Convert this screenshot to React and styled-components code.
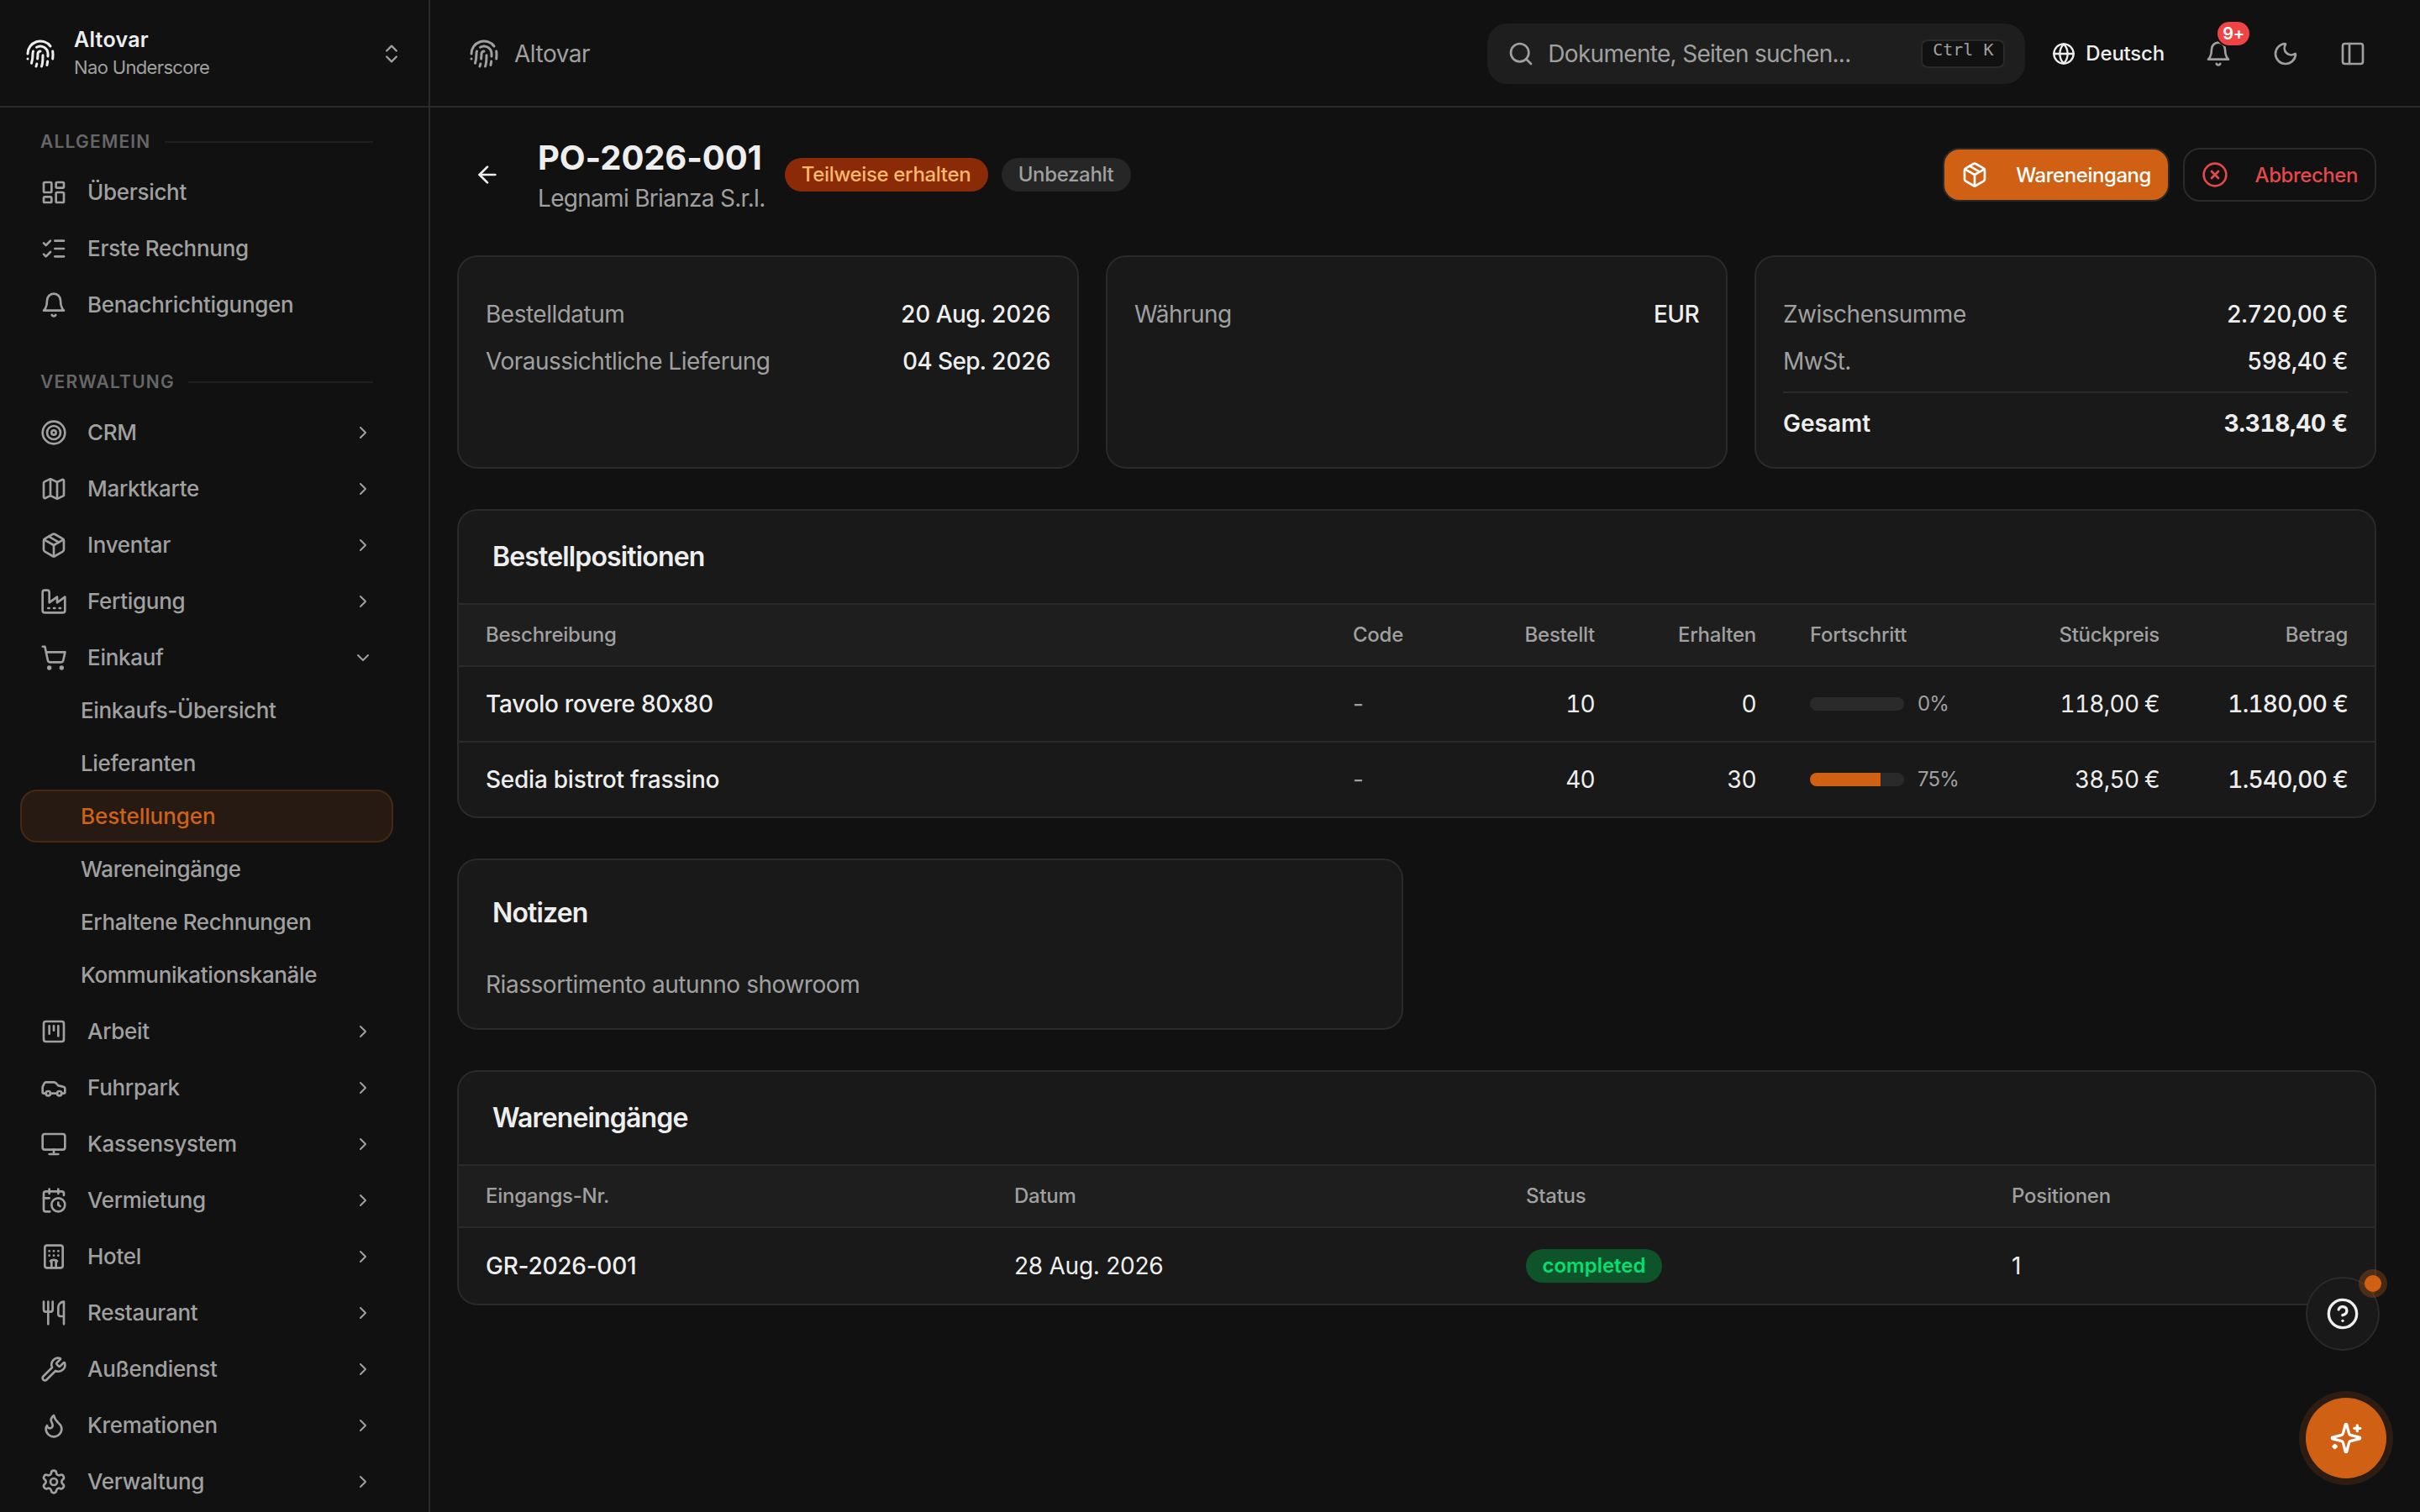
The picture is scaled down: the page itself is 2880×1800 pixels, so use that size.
import React from 'react';
import styled, { createGlobalStyle, css } from 'styled-components';
import {
  ArrowLeft, CalendarClock, Car, ChevronDown, ChevronRight, ChevronsUpDown,
  CircleHelp, CircleX, FingerprintPattern, Flame, Globe, Hotel, LayoutDashboard,
  ListChecks, Map as MapIcon, Monitor, Moon, Package, PanelLeft, Search,
  Settings, ShoppingCart, SquareKanban, Target, Utensils, Wrench,
} from 'lucide-react';

const GlobalStyle = createGlobalStyle`
  * {
    box-sizing: border-box;
  }

  body {
    margin: 0;
    background-color: #111111;
    color: #eeeeee;
    font-family: "Inter", "Liberation Sans", sans-serif;
    font-size: 28px;
    line-height: 40px;
    font-feature-settings: "calt" 0;
  }

  svg {
    display: block;
    flex-shrink: 0;
  }

  button {
    font-family: inherit;
    cursor: pointer;
  }
`;

const Layout = styled.div`
  display: flex;
  width: 2880px;
  height: 1800px;
  overflow: hidden;
`;

/* Sidebar */

const Sidebar = styled.aside`
  width: 512px;
  flex-shrink: 0;
  border-right: 2px solid #2a2a2a;
`;

const Workspace = styled.div`
  display: flex;
  align-items: center;
  height: 128px;
  padding: 2px 30px 0;
  border-bottom: 2px solid #2a2a2a;
`;

const WorkspaceText = styled.div`
  flex: 1;
  margin: 0 0 2px 22px;
`;

const WorkspaceName = styled.div`
  font-size: 25px;
  font-weight: 600;
  line-height: 34px;
  letter-spacing: 0.25px;
`;

const WorkspaceUser = styled.div`
  font-size: 22px;
  line-height: 32px;
  letter-spacing: -0.65px;
  color: #a0a0a0;
`;

const Nav = styled.nav`
  padding: 21px 42px 0 24px;
`;

const NavSection = styled.section`
  margin-bottom: 41px;
`;

const NavLabel = styled.h6`
  display: flex;
  align-items: center;
  gap: 16px;
  height: 40px;
  margin: 0 24px 8px;
  font-size: 21px;
  font-weight: 600;
  letter-spacing: 1.2px;
  text-transform: uppercase;
  color: #666666;

  &::after {
    content: "";
    flex: 1;
    height: 2px;
    background-color: #202020;
  }
`;

const NavItem = styled.div`
  display: flex;
  align-items: center;
  gap: 24px;
  height: 63px;
  margin-bottom: 4px;
  padding: 0 24px;
  font-size: 26px;
  font-weight: 500;
  letter-spacing: -0.3px;
  color: #a0a0a0;

  span {
    flex: 1;
  }
`;

const SubList = styled.div`
  margin: -4px 0 4px;
`;

const SubItem = styled.div`
  display: flex;
  align-items: center;
  height: 63px;
  padding: 0 70px;
  border: 2px solid transparent;
  border-radius: 20px;
  font-size: 26px;
  font-weight: 500;
  letter-spacing: -0.35px;
  white-space: nowrap;
  color: #a0a0a0;
  ${({ $active }) => $active && css`
    border-color: #472810;
    background-color: #261a12;
    color: #ce6218;
    letter-spacing: -0.1px;
  `}
`;

/* Header */

const Main = styled.div`
  display: flex;
  flex: 1;
  flex-direction: column;
`;

const Header = styled.header`
  display: flex;
  align-items: center;
  height: 128px;
  padding: 2px 64px 0 46px;
  border-bottom: 2px solid #2a2a2a;
`;

const Brand = styled.div`
  display: flex;
  flex: 1;
  align-items: center;
  gap: 18px;
  letter-spacing: -0.5px;
  color: #a0a0a0;
`;

const SearchBox = styled.div`
  display: flex;
  align-items: center;
  gap: 16px;
  width: 640px;
  height: 72px;
  padding: 0 24px;
  border-radius: 24px;
  background-color: #1e1e1e;
  color: #a0a0a0;

  span {
    flex: 1;
    letter-spacing: -0.7px;
    white-space: nowrap;
  }
`;

const Kbd = styled.kbd`
  width: 100px;
  height: 34px;
  border: 2px solid #2a2a2a;
  border-radius: 8px;
  background-color: #111111;
  font-family: "DejaVu Sans Mono", monospace;
  font-size: 20px;
  line-height: 21px;
  text-align: center;
`;

const Language = styled.div`
  display: flex;
  align-items: center;
  gap: 12px;
  margin-left: 32px;
  font-size: 24px;
  font-weight: 500;
  letter-spacing: -0.2px;
`;

const HeaderIcons = styled.div`
  display: flex;
  align-items: center;
  gap: 48px;
  margin-left: 48px;
  color: #a0a0a0;
`;

const BellWrapper = styled.div`
  position: relative;
`;

const BellBadge = styled.span`
  position: absolute;
  top: -24px;
  left: 13px;
  width: 42px;
  height: 32px;
  border: 2px solid #111111;
  border-radius: 16px;
  background-color: #ef4444;
  color: #ffffff;
  font-size: 20px;
  font-weight: 600;
  letter-spacing: -0.3px;
  line-height: 28px;
  text-align: center;
`;

/* Page */

const Page = styled.main`
  display: flex;
  flex-direction: column;
  gap: 48px;
  padding: 34px 52px 0 32px;
`;

const PageHeader = styled.div`
  display: flex;
  align-items: center;
  height: 92px;
`;

const BackButton = styled.div`
  padding: 0 20px;
  margin-right: 24px;
`;

const Heading = styled.div`
  padding-top: 4px;
`;

const Title = styled.h1`
  margin: 0;
  font-size: 40px;
  font-weight: 700;
  letter-spacing: -0.1px;
  line-height: 52px;
`;

const Supplier = styled.div`
  color: #a0a0a0;
  letter-spacing: -0.7px;
  line-height: 45px;
`;

const badgeTones = {
  orange: css`
    background-color: #8a2a07;
    color: #ffb86a;
  `,
  gray: css`
    background-color: #262626;
    color: #a0a0a0;
  `,
  green: css`
    background-color: #0d542b;
    color: #05df72;
    font-weight: 600;
    letter-spacing: 0;
  `,
};

const Badge = styled.span`
  display: inline-flex;
  align-items: center;
  justify-content: center;
  width: ${({ $width }) => $width}px;
  height: 40px;
  border-radius: 20px;
  font-size: 24px;
  font-weight: 500;
  letter-spacing: -0.35px;
  ${({ $tone }) => badgeTones[$tone]}
`;

const Badges = styled.div`
  display: flex;
  flex: 1;
  gap: 16px;
  margin-left: 23px;
`;

const Actions = styled.div`
  display: flex;
  gap: 16px;
`;

const Button = styled.button`
  display: flex;
  align-items: center;
  justify-content: space-between;
  width: ${({ $primary }) => ($primary ? 270 : 230)}px;
  height: 64px;
  padding: 0 20px;
  border: 2px solid #2a2a2a;
  border-radius: 20px;
  background-color: ${({ $primary }) => ($primary ? '#d06013' : '#111111')};
  color: ${({ $primary }) => ($primary ? '#ffffff' : '#e54848')};
  font-size: 24px;
  font-weight: 500;
  letter-spacing: -0.45px;
`;

const Card = styled.section`
  border: 2px solid #2a2a2a;
  border-radius: 24px;
  background-color: #191919;
  overflow: hidden;
`;

const Summary = styled.div`
  display: grid;
  grid-template-columns: repeat(3, 1fr);
  gap: 32px;
  margin-top: 2px;
`;

const SummaryCard = styled(Card)`
  display: flex;
  flex-direction: column;
  gap: 16px;
  height: 254px;
  padding: 48px 32px 32px;
`;

const SummaryRow = styled.div`
  display: flex;
  justify-content: space-between;
  letter-spacing: -0.5px;
  color: #a0a0a0;

  strong {
    color: #eeeeee;
    font-weight: 500;
    font-variant-numeric: tabular-nums;
    letter-spacing: -0.6px;
  }
`;

const TotalRow = styled(SummaryRow)`
  padding-top: 16px;
  border-top: 2px solid #2a2a2a;
  color: #eeeeee;
  font-weight: 600;
  letter-spacing: 0;

  strong {
    font-weight: 700;
    letter-spacing: -0.3px;
  }
`;

const CardTitle = styled.h2`
  display: flex;
  align-items: center;
  height: ${({ $height }) => $height || 110}px;
  margin: 0;
  padding: 0 40px;
  font-size: 32px;
  font-weight: 600;
  letter-spacing: -0.85px;
`;

const Row = styled.div`
  display: grid;
  grid-template-columns: ${({ $columns }) => $columns};
  align-items: center;
  height: ${({ $height }) => $height || 90}px;
  border-top: 2px solid #2a2a2a;
  letter-spacing: -0.25px;
`;

const HeadRow = styled(Row)`
  height: 74px;
  background-color: #1e1e1e;
  color: #a0a0a0;
  font-size: 24px;
  font-weight: 500;
`;

const Cell = styled.div`
  display: flex;
  align-items: center;
  padding: 0 32px;
  justify-content: ${({ $right }) => ($right ? 'flex-end' : 'flex-start')};
  font-weight: ${({ $medium }) => ($medium ? 500 : 'inherit')};
  color: ${({ $muted }) => ($muted ? '#a0a0a0' : 'inherit')};
  white-space: nowrap;
`;

const NumberCell = styled(Cell)`
  justify-content: flex-end;
  font-variant-numeric: tabular-nums;
  letter-spacing: -0.75px;
`;

const Progress = styled.div`
  width: 112px;
  height: 16px;
  margin-right: 16px;
  border-radius: 8px;
  background-color: #2a2a2a;
  overflow: hidden;
`;

const ProgressFill = styled.div`
  height: 100%;
  background-color: #d06013;
`;

const Percent = styled.span`
  font-size: 24px;
  letter-spacing: -0.8px;
  color: #a0a0a0;
`;

const NotesCard = styled(Card)`
  width: 1126px;
  height: 204px;
`;

const Note = styled.p`
  margin: 0;
  padding: 2px 32px 0;
  letter-spacing: -0.45px;
  color: #a0a0a0;
`;

/* Floating buttons */

const HelpButton = styled.div`
  position: absolute;
  top: 1520px;
  left: 2744px;
  display: flex;
  align-items: center;
  justify-content: center;
  width: 88px;
  height: 88px;
  border: 2px solid #2a2a2a;
  border-radius: 50%;
  background-color: #191919;
`;

const HelpDot = styled.span`
  position: absolute;
  top: -4px;
  right: -4px;
  width: 20px;
  height: 20px;
  border-radius: 50%;
  background-color: #d06013;
  box-shadow: 0 0 0 7px rgba(208, 96, 19, 0.28);
`;

const AssistantButton = styled.div`
  position: absolute;
  top: 1664px;
  left: 2744px;
  display: flex;
  align-items: center;
  justify-content: center;
  width: 96px;
  height: 96px;
  border-radius: 50%;
  background-color: #d06013;
  color: #ffffff;
  box-shadow: 0 0 0 8px rgba(208, 96, 19, 0.15);
`;

const Glyph = ({ size = 32, strokeWidth = 2, children }) => (
  <svg
    width={size}
    height={size}
    viewBox="0 0 24 24"
    fill="none"
    stroke="currentColor"
    strokeWidth={strokeWidth}
    strokeLinecap="round"
    strokeLinejoin="round"
  >
    {children}
  </svg>
);

const BellIcon = (props) => (
  <Glyph {...props}>
    <path d="M6 8a6 6 0 0 1 12 0c0 7 3 9 3 9H3s3-2 3-9" />
    <path d="M10.3 21a1.94 1.94 0 0 0 3.4 0" />
  </Glyph>
);

const FactoryIcon = (props) => (
  <Glyph {...props}>
    <path d="M2 20a2 2 0 0 0 2 2h16a2 2 0 0 0 2-2V8l-7 5V8l-7 5V4a2 2 0 0 0-2-2H4a2 2 0 0 0-2 2Z" />
    <path d="M17 18h1" />
    <path d="M12 18h1" />
    <path d="M7 18h1" />
  </Glyph>
);

const SparklesIcon = (props) => (
  <Glyph {...props}>
    <path d="M9.937 15.5A2 2 0 0 0 8.5 14.063l-6.135-1.582a.5.5 0 0 1 0-.962L8.5 9.936A2 2 0 0 0 9.937 8.5l1.582-6.135a.5.5 0 0 1 .963 0L14.063 8.5A2 2 0 0 0 15.5 9.937l6.135 1.581a.5.5 0 0 1 0 .964L15.5 14.063a2 2 0 0 0-1.437 1.437l-1.582 6.135a.5.5 0 0 1-.963 0z" />
    <path d="M20 3v4" />
    <path d="M22 5h-4" />
    <path d="M4 17v2" />
    <path d="M5 18H3" />
  </Glyph>
);

const generalItems = [
  { label: 'Übersicht', icon: LayoutDashboard },
  { label: 'Erste Rechnung', icon: ListChecks },
  { label: 'Benachrichtigungen', icon: BellIcon },
];

const managementItems = [
  { label: 'CRM', icon: Target },
  { label: 'Marktkarte', icon: MapIcon },
  { label: 'Inventar', icon: Package },
  { label: 'Fertigung', icon: FactoryIcon },
  {
    label: 'Einkauf',
    icon: ShoppingCart,
    children: [
      'Einkaufs-Übersicht',
      'Lieferanten',
      'Bestellungen',
      'Wareneingänge',
      'Erhaltene Rechnungen',
      'Kommunikationskanäle',
    ],
  },
  { label: 'Arbeit', icon: SquareKanban },
  { label: 'Fuhrpark', icon: Car },
  { label: 'Kassensystem', icon: Monitor },
  { label: 'Vermietung', icon: CalendarClock },
  { label: 'Hotel', icon: Hotel },
  { label: 'Restaurant', icon: Utensils },
  { label: 'Außendienst', icon: Wrench },
  { label: 'Kremationen', icon: Flame },
  { label: 'Verwaltung', icon: Settings },
];

const orderLines = [
  {
    name: 'Tavolo rovere 80x80', ordered: 10, received: 0, progress: 0, price: '118,00 €', amount: '1.180,00 €',
  },
  {
    name: 'Sedia bistrot frassino', ordered: 40, received: 30, progress: 75, price: '38,50 €', amount: '1.540,00 €',
  },
];

const lineColumns = '1032px 160px 192px 192px 256px 224px 224px';
const receiptColumns = '629px 609px 578px 464px';

const App = () => (
  <>
    <GlobalStyle />
    <Layout>
      <Sidebar>
        <Workspace>
          <FingerprintPattern size={36} />
          <WorkspaceText>
            <WorkspaceName>Altovar</WorkspaceName>
            <WorkspaceUser>Nao Underscore</WorkspaceUser>
          </WorkspaceText>
          <ChevronsUpDown size={28} color="#a0a0a0" />
        </Workspace>
        <Nav>
          <NavSection>
            <NavLabel>Allgemein</NavLabel>
            {generalItems.map(({ label, icon: Icon }) => (
              <NavItem key={label}>
                <Icon size={32} strokeWidth={2} />
                <span>{label}</span>
              </NavItem>
            ))}
          </NavSection>
          <NavSection>
            <NavLabel>Verwaltung</NavLabel>
            {managementItems.map(({ label, icon: Icon, children }) => (
              <React.Fragment key={label}>
                <NavItem>
                  <Icon size={32} strokeWidth={2} />
                  <span>{label}</span>
                  {children ? <ChevronDown size={24} /> : <ChevronRight size={24} />}
                </NavItem>
                {children && (
                  <SubList>
                    {children.map((child) => (
                      <SubItem key={child} $active={child === 'Bestellungen'}>{child}</SubItem>
                    ))}
                  </SubList>
                )}
              </React.Fragment>
            ))}
          </NavSection>
        </Nav>
      </Sidebar>

      <Main>
        <Header>
          <Brand>
            <FingerprintPattern size={36} />
            Altovar
          </Brand>
          <SearchBox>
            <Search size={32} />
            <span>Dokumente, Seiten suchen...</span>
            <Kbd>Ctrl K</Kbd>
          </SearchBox>
          <Language>
            <Globe size={28} />
            Deutsch
          </Language>
          <HeaderIcons>
            <BellWrapper>
              <BellIcon />
              <BellBadge>9+</BellBadge>
            </BellWrapper>
            <Moon size={32} />
            <PanelLeft size={32} />
          </HeaderIcons>
        </Header>

        <Page>
          <PageHeader>
            <BackButton>
              <ArrowLeft size={32} />
            </BackButton>
            <Heading>
              <Title>PO-2026-001</Title>
              <Supplier>Legnami Brianza S.r.l.</Supplier>
            </Heading>
            <Badges>
              <Badge $tone="orange" $width={242}>Teilweise erhalten</Badge>
              <Badge $tone="gray" $width={154}>Unbezahlt</Badge>
            </Badges>
            <Actions>
              <Button type="button" $primary>
                <Package size={32} />
                Wareneingang
              </Button>
              <Button type="button">
                <CircleX size={32} />
                Abbrechen
              </Button>
            </Actions>
          </PageHeader>

          <Summary>
            <SummaryCard>
              <SummaryRow>
                Bestelldatum
                <strong>20 Aug. 2026</strong>
              </SummaryRow>
              <SummaryRow>
                Voraussichtliche Lieferung
                <strong>04 Sep. 2026</strong>
              </SummaryRow>
            </SummaryCard>
            <SummaryCard>
              <SummaryRow>
                Währung
                <strong>EUR</strong>
              </SummaryRow>
            </SummaryCard>
            <SummaryCard>
              <SummaryRow>
                Zwischensumme
                <strong>2.720,00 €</strong>
              </SummaryRow>
              <SummaryRow>
                MwSt.
                <strong>598,40 €</strong>
              </SummaryRow>
              <TotalRow>
                Gesamt
                <strong>3.318,40 €</strong>
              </TotalRow>
            </SummaryCard>
          </Summary>

          <Card>
            <CardTitle>Bestellpositionen</CardTitle>
            <HeadRow $columns={lineColumns}>
              <Cell>Beschreibung</Cell>
              <Cell>Code</Cell>
              <Cell $right>Bestellt</Cell>
              <Cell $right>Erhalten</Cell>
              <Cell>Fortschritt</Cell>
              <Cell $right>Stückpreis</Cell>
              <Cell $right>Betrag</Cell>
            </HeadRow>
            {orderLines.map((line) => (
              <Row key={line.name} $columns={lineColumns}>
                <Cell $medium>{line.name}</Cell>
                <Cell $muted>-</Cell>
                <NumberCell>{line.ordered}</NumberCell>
                <NumberCell>{line.received}</NumberCell>
                <Cell>
                  <Progress>
                    <ProgressFill style={{ width: `${line.progress}%` }} />
                  </Progress>
                  <Percent>{`${line.progress}%`}</Percent>
                </Cell>
                <NumberCell>{line.price}</NumberCell>
                <NumberCell $medium>{line.amount}</NumberCell>
              </Row>
            ))}
          </Card>

          <NotesCard>
            <CardTitle $height={126}>Notizen</CardTitle>
            <Note>Riassortimento autunno showroom</Note>
          </NotesCard>

          <Card>
            <CardTitle>Wareneingänge</CardTitle>
            <HeadRow $columns={receiptColumns}>
              <Cell>Eingangs-Nr.</Cell>
              <Cell>Datum</Cell>
              <Cell>Status</Cell>
              <Cell>Positionen</Cell>
            </HeadRow>
            <Row $columns={receiptColumns} $height={92}>
              <Cell $medium>GR-2026-001</Cell>
              <Cell>28 Aug. 2026</Cell>
              <Cell>
                <Badge $tone="green" $width={162}>completed</Badge>
              </Cell>
              <Cell>1</Cell>
            </Row>
          </Card>
        </Page>
      </Main>

      <HelpButton>
        <CircleHelp size={40} />
        <HelpDot />
      </HelpButton>
      <AssistantButton>
        <SparklesIcon size={40} />
      </AssistantButton>
    </Layout>
  </>
);

export default App;
